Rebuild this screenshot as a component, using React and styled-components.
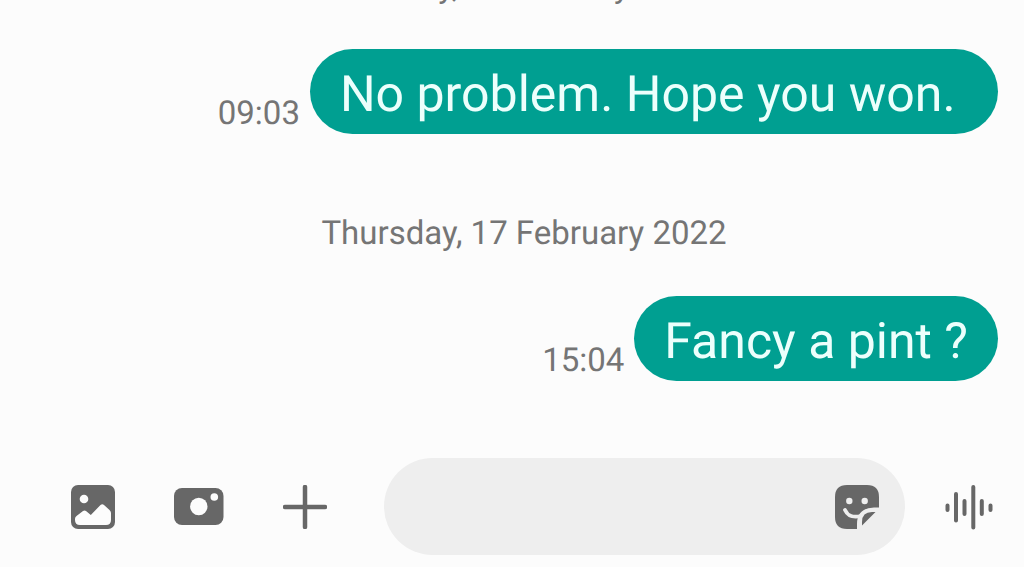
import React, { useState } from 'react';
import styled, { createGlobalStyle } from 'styled-components';

const messages = [
  { id: 1, date: 'Monday, 24 January 2022', time: '09:03', text: 'No problem. Hope you won. ' },
  { id: 2, date: 'Thursday, 17 February 2022', time: '15:04', text: 'Fancy a pint ?' },
];

const GalleryIcon = () => (
  <svg width="44" height="44" viewBox="0 0 44 44" aria-hidden="true">
    <rect width="44" height="44" rx="7" fill="#676767" />
    <circle cx="13" cy="14" r="4.3" fill="#fcfcfc" />
    <path
      d="M4 34 Q4 32 5.500 31 L12 26 Q13.700 24.800 15 26 L19.800 30 L29.500 20 Q31.300 18.300 33 20 L38.500 25 Q40 26.500 40 28 V35 Q40 40 35 40 H9 Q4 40 4 35 Z"
      fill="#fcfcfc"
    />
  </svg>
);

const CameraIcon = () => (
  <svg width="50" height="37" viewBox="0 0 50 37" aria-hidden="true">
    <rect width="49.500" height="37" rx="8" fill="#676767" />
    <circle cx="24.800" cy="18.500" r="8.700" fill="#fcfcfc" />
    <circle cx="40.300" cy="9" r="3.800" fill="#fcfcfc" />
  </svg>
);

const PlusIcon = () => (
  <svg width="44" height="44" viewBox="0 0 44 44" aria-hidden="true">
    <path d="M22 2 V42 M2 22 H42" stroke="#676767" strokeWidth="4.500" strokeLinecap="round" />
  </svg>
);

const StickerIcon = () => (
  <svg width="44" height="44" viewBox="0 0 44 44" fill="none" aria-hidden="true">
    <path
      d="M12 0 H32 Q44 0 44 12 V22.500 H39 Q22 23 22 39 V44 H12 Q0 44 0 32 V12 Q0 0 12 0 Z"
      fill="#676767"
    />
    <circle cx="14.300" cy="16" r="3.200" fill="#eee" />
    <circle cx="29.700" cy="16" r="3.200" fill="#eee" />
    <path d="M10 25 C13 31.500 18 32.800 26 31" stroke="#eee" strokeWidth="3.800" strokeLinecap="round" />
    <path d="M40.500 27 L27 40.500 V37 Q27 27 37 27 Z" fill="#676767" />
  </svg>
);

const VoiceIcon = () => (
  <svg width="48" height="48" viewBox="0 0 48 48" aria-hidden="true">
    <path
      d="M2.500 22.500 V27 M11 11 V37.500 M19.500 18 V31 M28.300 4 V44.500 M36.800 18 V31 M45.500 22.500 V27"
      stroke="#676767"
      strokeWidth="4"
      strokeLinecap="round"
    />
  </svg>
);

const App = () => {
  const [draft, setDraft] = useState('');

  return (
    <Screen>
      <GlobalStyle />
      <Thread>
        {messages.map((message) => (
          <React.Fragment key={message.id}>
            <DateHeading>{message.date}</DateHeading>
            <MessageRow>
              <Time>{message.time}</Time>
              <Bubble>{message.text}</Bubble>
            </MessageRow>
          </React.Fragment>
        ))}
      </Thread>

      <Composer onSubmit={(e) => e.preventDefault()}>
        <Attachments>
          <IconButton type="button" aria-label="Gallery"><GalleryIcon /></IconButton>
          <IconButton type="button" aria-label="Camera"><CameraIcon /></IconButton>
          <IconButton type="button" aria-label="More options"><PlusIcon /></IconButton>
        </Attachments>
        <InputPill>
          <MessageInput
            type="text"
            aria-label="Message"
            value={draft}
            onChange={(e) => setDraft(e.target.value)}
          />
          <IconButton type="button" aria-label="Stickers"><StickerIcon /></IconButton>
        </InputPill>
        <IconButton type="button" aria-label="Voice message"><VoiceIcon /></IconButton>
      </Composer>
    </Screen>
  );
};

export default App;

// Styled Components
const GlobalStyle = createGlobalStyle`
  * {
    box-sizing: border-box;
  }

  body {
    margin: 0;
    background: #fcfcfc;
    font-family: Roboto, "Liberation Sans", sans-serif;
    text-rendering: geometricPrecision;
  }
`;

const Screen = styled.div`
  display: flex;
  flex-direction: column;
  height: 100vh;
`;

const Thread = styled.main`
  flex: 1;
  min-height: 0;
  display: flex;
  flex-direction: column;
  justify-content: flex-end;
  overflow: hidden;
  padding: 0 26px 77px 50px;
`;

const DateHeading = styled.h2`
  flex-shrink: 0;
  margin: 80px 0 42px;
  color: #757575;
  font-size: 33px;
  font-weight: 400;
  line-height: 40px;
  text-align: center;
`;

const MessageRow = styled.div`
  flex-shrink: 0;
  display: flex;
  justify-content: flex-end;
  align-items: flex-end;
  gap: 10px;
`;

const Time = styled.time`
  color: #757575;
  font-size: 33px;
  line-height: 40px;
`;

const Bubble = styled.p`
  margin: 0;
  padding: 16px 30px 9px;
  border-radius: 43px;
  background: #009f91;
  color: #ecfffc;
  font-size: 50px;
  line-height: 60px;
  white-space: break-spaces;
`;

const Composer = styled.form`
  display: flex;
  align-items: center;
  padding: 0 31px 12px 71px;
`;

const Attachments = styled.div`
  display: flex;
  align-items: center;
  gap: 59px;
  margin-right: 57px;
`;

const IconButton = styled.button`
  flex-shrink: 0;
  display: flex;
  padding: 0;
  border: none;
  background: none;
  cursor: pointer;
`;

const InputPill = styled.div`
  flex: 1;
  min-width: 0;
  display: flex;
  align-items: center;
  height: 97px;
  margin-right: 40px;
  padding: 0 26px 0 40px;
  border-radius: 49px;
  background: #eee;
`;

const MessageInput = styled.input`
  flex: 1;
  min-width: 0;
  border: none;
  outline: none;
  background: transparent;
  color: #252525;
  font-family: inherit;
  font-size: 50px;
`;
